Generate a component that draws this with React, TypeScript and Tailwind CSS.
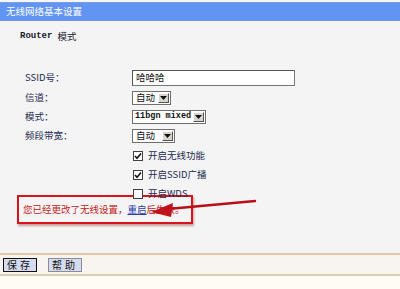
import React from 'react'

const cjk = { fontFamily: '"SimSun", "Noto Sans CJK SC", "DejaVu Sans", sans-serif' }
const mono = { fontFamily: '"Liberation Mono", "Noto Sans CJK SC", monospace' }

function Select({ value, width }: { value: string; width: string }) {
  const isLatin = /^[0-9a-z ]+$/.test(value)
  return (
    <div className={`flex h-[14px] shrink-0 items-center border border-[#6f6f6f] bg-white ${width}`}>
      <span
        className={`flex-1 whitespace-nowrap pl-[2px] leading-none text-[#111] ${isLatin ? 'text-[8.5px] font-bold' : 'text-[9.5px] pl-[3px]'}`}
        style={isLatin ? mono : cjk}
      >
        {value}
      </span>
      <span className="mr-[1px] flex h-[10px] w-[11px] shrink-0 items-center justify-center border border-t-white border-l-white border-r-[#555] border-b-[#555] bg-[#d8d4cc]">
        <svg width="7" height="4" viewBox="0 0 7 4">
          <path d="M0 0h7L3.5 4z" fill="#111" />
        </svg>
      </span>
    </div>
  )
}

function Check({ checked, label }: { checked: boolean; label: React.ReactNode }) {
  return (
    <div className="flex h-[19px] items-center gap-[5px]">
      <span className="flex h-[10px] w-[10px] items-center justify-center border border-[#404040] bg-white">
        {checked && (
          <svg width="8" height="8" viewBox="0 0 8 8">
            <path d="M1 4l2 2.2L7 1.5" stroke="#111" strokeWidth="1.6" fill="none" />
          </svg>
        )}
      </span>
      <span className="whitespace-nowrap text-[9.5px] leading-none text-[#1c2a52]" style={cjk}>
        {label}
      </span>
    </div>
  )
}

export default function App() {
  const rows: { label: string; field: React.ReactNode }[] = [
    {
      label: 'SSID号：',
      field: (
        <div className="flex h-[16px] w-[163px] shrink-0 items-center border border-[#777] border-t-[#555] border-l-[#555] bg-white pl-[3px] text-[9.5px] leading-none text-[#111]" style={cjk}>
          哈哈哈
        </div>
      ),
    },
    { label: '信道：', field: <Select value="自动" width="w-[39px]" /> },
    { label: '模式：', field: <Select value="11bgn mixed" width="w-[74px]" /> },
    { label: '频段带宽：', field: <Select value="自动" width="w-[43px]" /> },
  ]

  return (
    <div className="relative h-[289px] w-[400px] overflow-hidden bg-[#f4f4f4]">
      {/* title bar */}
      <div className="h-[2px] bg-[#f6f7fb]" />
      <div className="flex h-[19px] items-center border-t border-b border-t-[#7f9be0] border-b-[#7a93d8] bg-[#6294f4] pl-[6px] text-[9.5px] leading-none text-white" style={cjk}>
        无线网络基本设置
      </div>

      <div className="flex h-[31px] items-center pl-[20px] text-[9.5px] leading-none text-[#1a1a2e]">
        <span style={mono} className="mr-[5px] text-[9px] font-bold">Router</span>
        <span style={cjk}>模式</span>
      </div>

      {/* form */}
      <div className="mt-[16px] flex flex-col">
        {rows.map((r, i) => (
          <div key={i} className={`flex items-center ${i === 0 ? 'h-[20px]' : 'h-[19px]'}`}>
            <span className="w-[132px] shrink-0 whitespace-nowrap pl-[25px] text-[9.5px] leading-none text-[#1c2a52]" style={cjk}>
              {r.label}
            </span>
            {r.field}
          </div>
        ))}
      </div>

      <div className="mt-[1px] flex flex-col pl-[133px]">
        <Check checked label="开启无线功能" />
        <Check checked label="开启SSID广播" />
        <Check checked={false} label="开启WDS" />
      </div>

      {/* notice */}
      <div className="ml-[17px] mt-[-8px] flex h-[29px] w-[176px] items-center whitespace-nowrap border-[2px] border-[#d8141a] pl-[4px] text-[9.5px] leading-none shadow-[1px_2px_2px_rgba(120,0,0,0.35)]" style={cjk}>
        <span className="text-[#c41a1a]">您已经更改了无线设置，</span>
        <span className="text-[#2a3aa8] underline">重启</span>
        <span className="text-[#c41a1a]">后生效。</span>
      </div>

      {/* arrow annotation */}
      <svg className="absolute left-0 top-0" width="400" height="289" viewBox="0 0 400 289">
        <path d="M255 201 L168 209" stroke="#b80f14" strokeWidth="2.4" strokeLinecap="round" />
        <path d="M151 212 L173 203 L171 217 Z" fill="#c0121a" />
      </svg>

      {/* button bar */}
      <div className="mt-[29px] flex h-[23px] items-center gap-[11px] border-t-2 border-b-2 border-t-[#e2c8a8] border-b-[#dccfb2] bg-[#f8f5f1] pl-[3px]">
        <button className="flex h-[14px] w-[34px] items-center justify-center border border-[#111] bg-[#d6dcef] text-[10px] leading-none tracking-[3px] text-[#111]" style={cjk}>
          保存
        </button>
        <button className="flex h-[14px] w-[34px] items-center justify-center border border-[#8a8a9a] bg-[#d6dcef] text-[10px] leading-none tracking-[3px] text-[#111]" style={cjk}>
          帮助
        </button>
      </div>
      <div className="h-[20px] bg-[#fffcf3]" />
    </div>
  )
}
